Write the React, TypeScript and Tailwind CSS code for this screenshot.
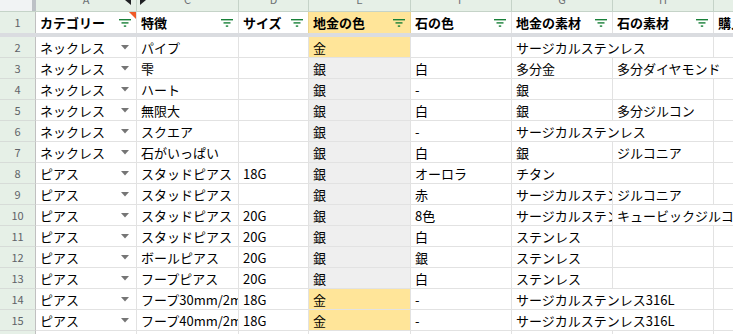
import React from "react";

const GRID =
  "grid grid-cols-[36px_101px_102px_70px_102px_101px_101px_101px_120px]";

type Row = {
  n: number;
  a: string;
  c: string;
  d: string;
  e: string;
  f: string;
  g: string;
  h: string;
  gSpan?: boolean;
  hSpan?: boolean;
};

const rows: Row[] = [
  { n: 2, a: "ネックレス", c: "パイプ", d: "", e: "金", f: "", g: "サージカルステンレス", h: "", gSpan: true },
  { n: 3, a: "ネックレス", c: "雫", d: "", e: "銀", f: "白", g: "多分金", h: "多分ダイヤモンド", hSpan: true },
  { n: 4, a: "ネックレス", c: "ハート", d: "", e: "銀", f: "-", g: "銀", h: "" },
  { n: 5, a: "ネックレス", c: "無限大", d: "", e: "銀", f: "白", g: "銀", h: "多分ジルコン" },
  { n: 6, a: "ネックレス", c: "スクエア", d: "", e: "銀", f: "-", g: "サージカルステンレス", h: "", gSpan: true },
  { n: 7, a: "ネックレス", c: "石がいっぱい", d: "", e: "銀", f: "白", g: "銀", h: "ジルコニア" },
  { n: 8, a: "ピアス", c: "スタッドピアス", d: "18G", e: "銀", f: "オーロラ", g: "チタン", h: "" },
  { n: 9, a: "ピアス", c: "スタッドピアス", d: "", e: "銀", f: "赤", g: "サージカルステンレス", h: "ジルコニア" },
  { n: 10, a: "ピアス", c: "スタッドピアス", d: "20G", e: "銀", f: "8色", g: "サージカルステンレス", h: "キュービックジルコニア", hSpan: true },
  { n: 11, a: "ピアス", c: "スタッドピアス", d: "20G", e: "銀", f: "白", g: "ステンレス", h: "" },
  { n: 12, a: "ピアス", c: "ボールピアス", d: "20G", e: "銀", f: "銀", g: "ステンレス", h: "" },
  { n: 13, a: "ピアス", c: "フープピアス", d: "20G", e: "銀", f: "白", g: "ステンレス", h: "" },
  { n: 14, a: "ピアス", c: "フープ30mm/2mm", d: "18G", e: "金", f: "-", g: "サージカルステンレス316L", h: "", gSpan: true },
  { n: 15, a: "ピアス", c: "フープ40mm/2mm", d: "18G", e: "金", f: "-", g: "サージカルステンレス316L", h: "", gSpan: true },
];

function FilterIcon() {
  return (
    <svg width="12" height="8" viewBox="0 0 12 8" className="shrink-0">
      <rect x="0" y="0" width="12" height="1.4" fill="#188038" />
      <rect x="2.5" y="3.2" width="7" height="1.4" fill="#188038" />
      <rect x="4.8" y="6.4" width="2.4" height="1.4" fill="#188038" />
    </svg>
  );
}

function DropArrow() {
  return (
    <svg width="8" height="5" viewBox="0 0 8 5" className="shrink-0">
      <path d="M0 0 L8 0 L4 4.5 Z" fill="#757575" />
    </svg>
  );
}

function Cell({
  text,
  className = "",
}: {
  text: string;
  className?: string;
}) {
  return (
    <div
      className={
        "flex items-center border-r border-b border-[#e2e2e2] pl-[4px] overflow-hidden whitespace-nowrap text-[13px] leading-none text-black " +
        className
      }
    >
      {text}
    </div>
  );
}

function HeadCell({
  text,
  filter = true,
  className = "",
  children,
}: {
  text: string;
  filter?: boolean;
  className?: string;
  children?: React.ReactNode;
}) {
  return (
    <div
      className={
        "relative flex items-center justify-between border-r border-[#e2e2e2] pl-[4px] pr-[5px] overflow-hidden whitespace-nowrap text-[13px] font-bold leading-none text-black " +
        className
      }
    >
      <span>{text}</span>
      {filter && <FilterIcon />}
      {children}
    </div>
  );
}

export default function App() {
  const letters = ["A", "C", "D", "E", "F", "G", "H", "I"];
  return (
    <div
      className="relative w-[733px] h-[334px] overflow-hidden bg-white"
      style={{ fontFamily: '"Noto Sans CJK JP", "Noto Sans", sans-serif' }}
    >
      {/* column letters */}
      <div className={GRID + " h-[12px] border-b border-[#c5d3c8]"}>
        <div className="flex bg-[#f1f3f4]">
          <div className="flex-1" />
          <div className="w-[4px] bg-[#bdc1c6]" />
        </div>
        {letters.map((l) => (
          <div
            key={l}
            className="flex justify-center items-start overflow-hidden border-r border-[#c5d3c8] bg-[#e6f0e7]"
          >
            <span className="-mt-[6px] text-[11px] leading-[11px] text-[#6b6f73]">
              {l}
            </span>
          </div>
        ))}
      </div>

      {/* hidden column arrows */}
      <svg
        width="22"
        height="6"
        viewBox="0 0 22 6"
        className="absolute left-[125px] top-0"
      >
        <path d="M6 -5 L0 0 L6 5 Z" fill="#202124" />
        <path d="M15 -5 L21 0 L15 5 Z" fill="#202124" />
      </svg>

      {/* header row 1 */}
      <div className={GRID + " h-[21px]"}>
        <div className="flex items-center justify-center border-r border-[#c0c0c0] bg-[#e6f0e7] text-[11px] text-[#5f6368]">
          1
        </div>
        <HeadCell text="カテゴリー">
          <svg
            width="7"
            height="7"
            viewBox="0 0 7 7"
            className="absolute right-0 top-0"
          >
            <path d="M0 0 L7 0 L7 7 Z" fill="#f05a28" />
          </svg>
        </HeadCell>
        <HeadCell text="特徴" />
        <HeadCell text="サイズ" />
        <HeadCell text="地金の色" className="bg-[#ffe599] border-l border-[#ecd58f] -ml-px" />
        <HeadCell text="石の色" />
        <HeadCell text="地金の素材" />
        <HeadCell text="石の素材" />
        <HeadCell text="購入日" filter={false} />
      </div>

      {/* freeze band */}
      <div className="h-[4px] bg-[#dadce0]" />

      {rows.map((r) => (
        <div key={r.n} className={GRID + " h-[21px]"}>
          <div className="flex items-center justify-center border-r border-b border-r-[#c0c0c0] border-b-[#d7dcd8] bg-[#e6f0e7] text-[11px] text-[#5f6368]">
            {r.n}
          </div>
          <div className="flex items-center justify-between border-r border-b border-[#e2e2e2] pl-[4px] pr-[7px] whitespace-nowrap text-[13px] leading-none text-black">
            <span>{r.a}</span>
            <DropArrow />
          </div>
          <Cell text={r.c} />
          <Cell text={r.d} />
          <Cell
            text={r.e}
            className={r.e === "金" ? "bg-[#ffe599]" : "bg-[#efefef]"}
          />
          <Cell text={r.f} />
          {r.gSpan ? (
            <>
              <Cell text={r.g} className="col-span-2" />
              <Cell text="" />
            </>
          ) : r.hSpan ? (
            <>
              <Cell text={r.g} />
              <Cell text={r.h} className="col-span-2" />
            </>
          ) : (
            <>
              <Cell text={r.g} />
              <Cell text={r.h} />
              <Cell text="" />
            </>
          )}
        </div>
      ))}

      {/* partial row 16 */}
      <div className={GRID + " h-[21px]"}>
        <div className="border-r border-[#c0c0c0] bg-[#e6f0e7]" />
        <Cell text="" />
        <Cell text="" />
        <Cell text="" />
        <Cell text="" />
        <Cell text="" />
        <Cell text="" />
        <Cell text="" />
        <Cell text="" />
      </div>
    </div>
  );
}
